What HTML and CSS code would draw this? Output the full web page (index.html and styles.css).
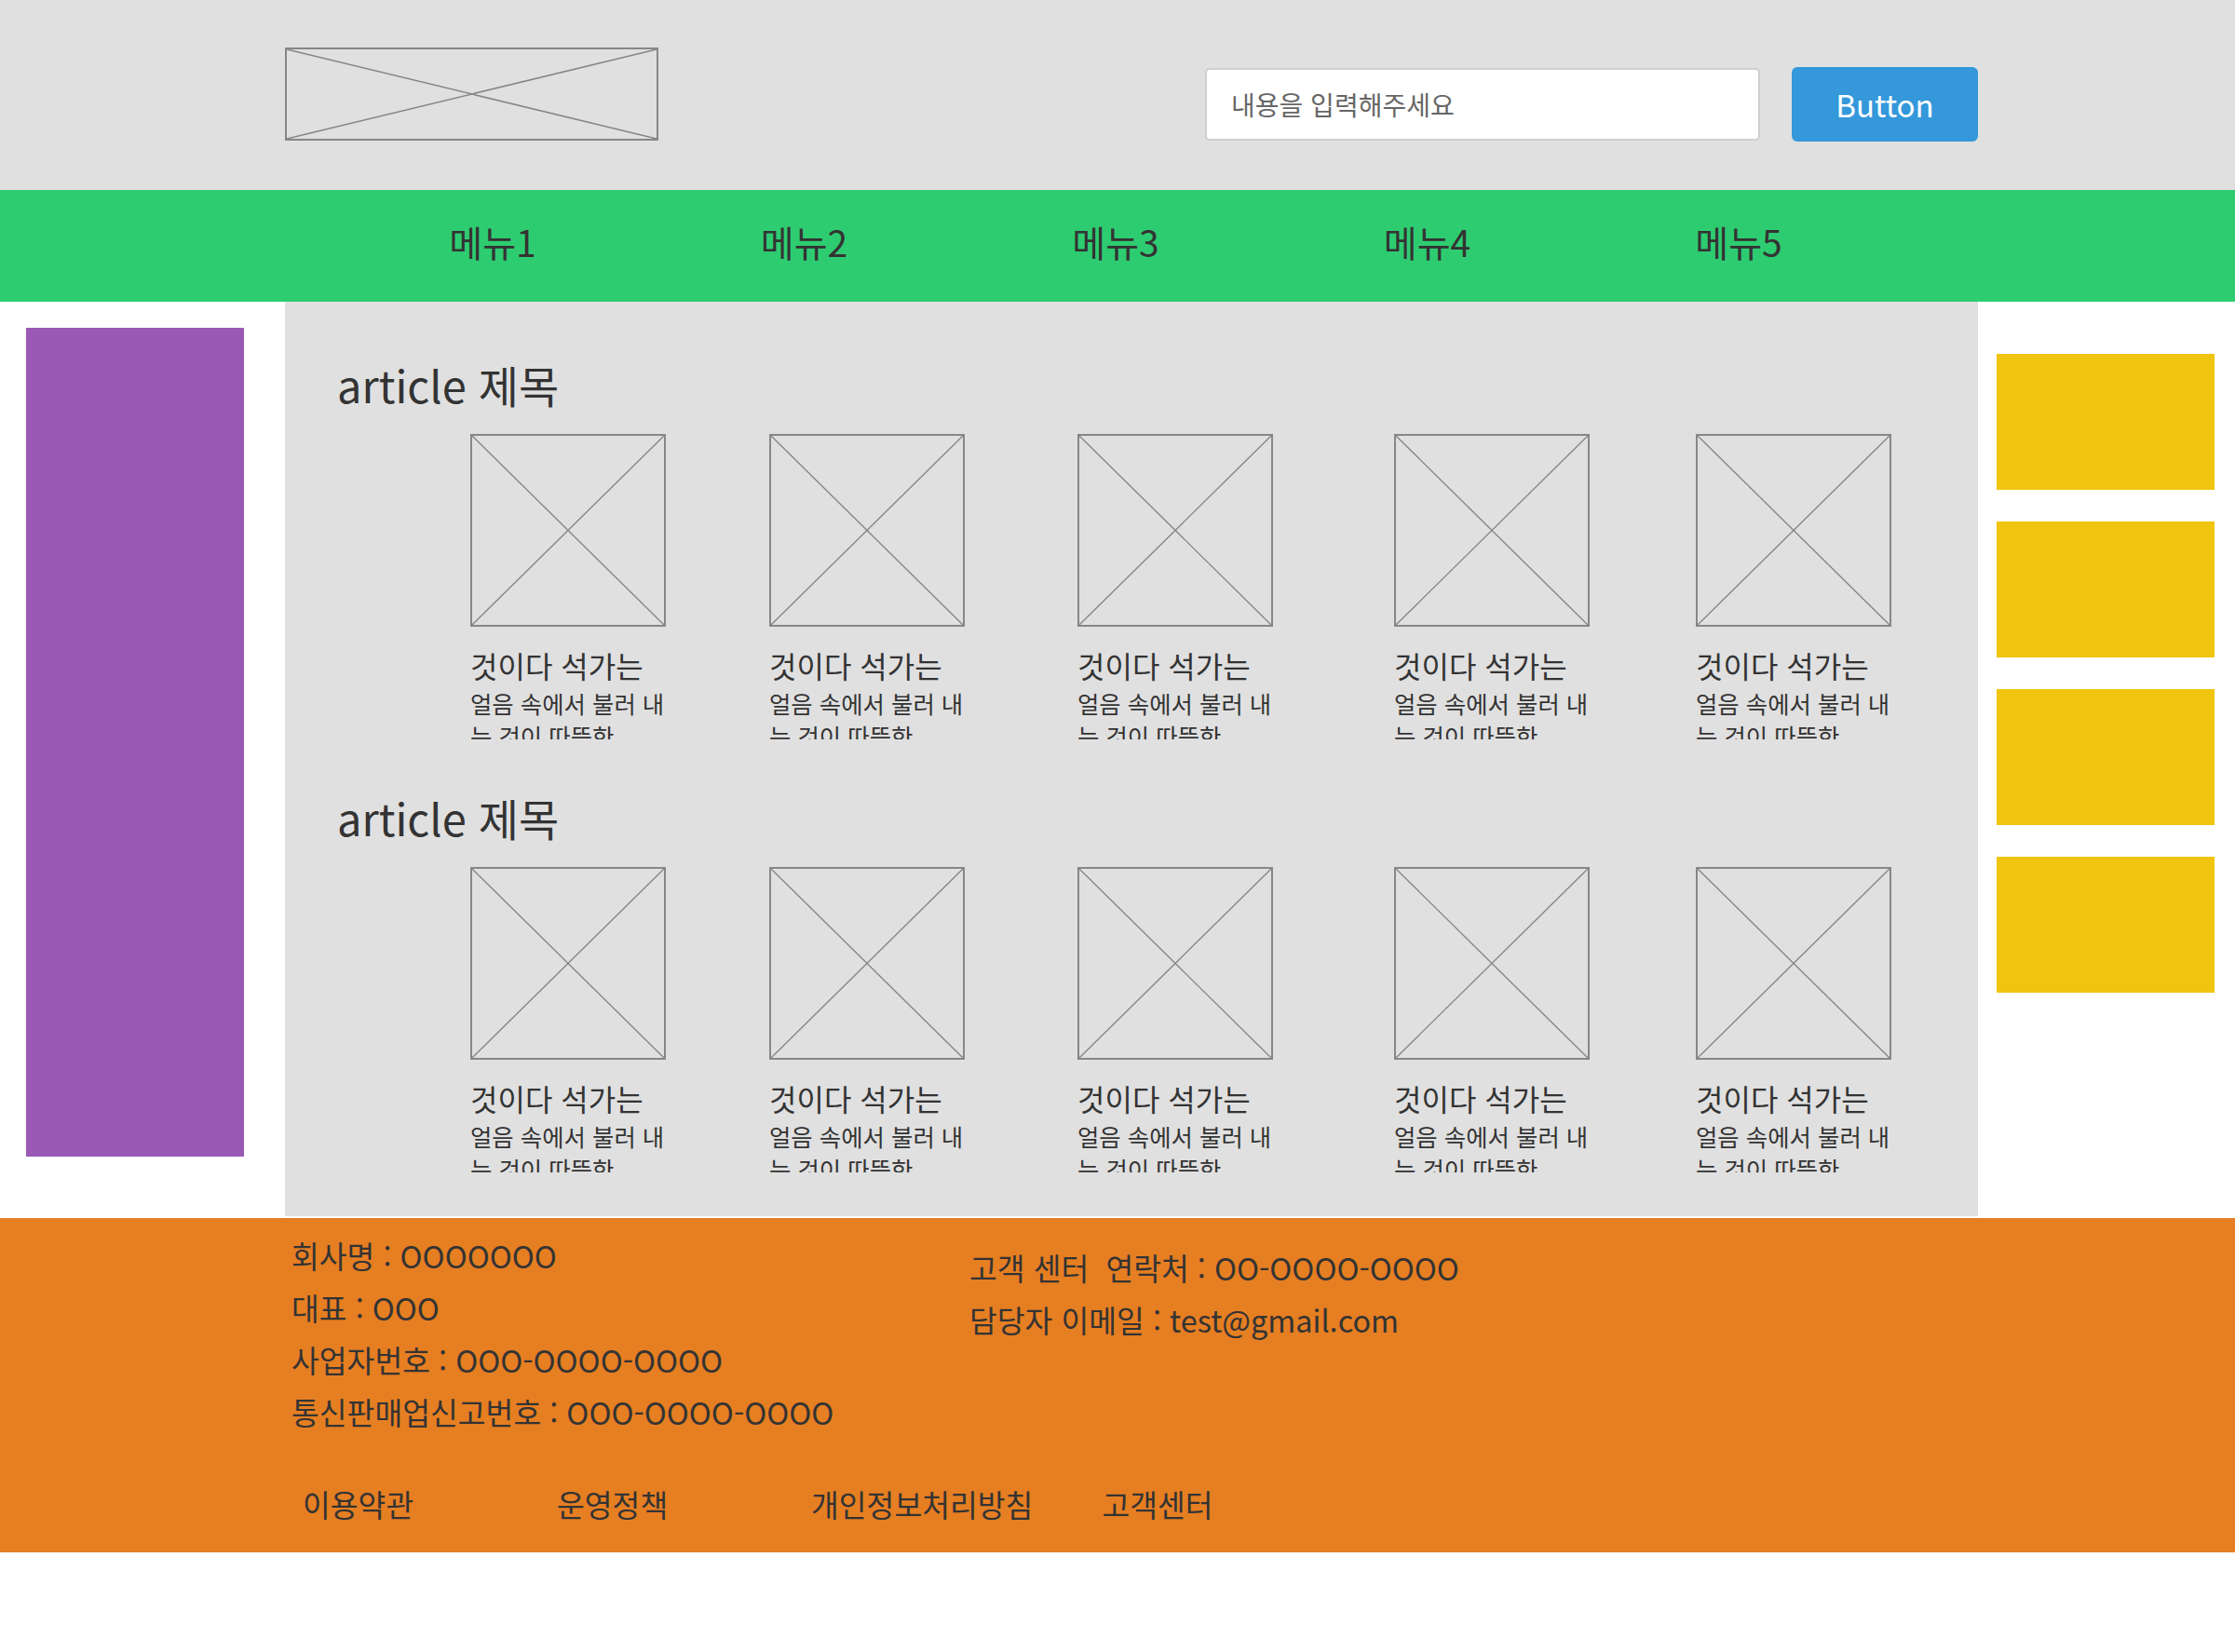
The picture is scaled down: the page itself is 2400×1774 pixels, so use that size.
FILE: index.html
```html
<!DOCTYPE html>
<html lang="ko">
<head>
<meta charset="utf-8">
<title>Layout</title>
<link rel="stylesheet" href="styles.css">
</head>
<body>
<header class="top">
  <div class="top-inner">
    <div class="logo">
      <svg viewBox="0 0 400 100" preserveAspectRatio="none">
        <rect x="1" y="1" width="398" height="98" fill="none" stroke="#878787" stroke-width="2"/>
        <line x1="2" y1="2" x2="398" y2="98" stroke="#878787" stroke-width="1.5"/>
        <line x1="398" y1="2" x2="2" y2="98" stroke="#878787" stroke-width="1.5"/>
      </svg>
    </div>
    <form class="search">
      <input class="search-input" type="text" placeholder="내용을 입력해주세요">
      <button class="search-btn" type="button">Button</button>
    </form>
  </div>
</header>

<nav class="nav">
  <ul class="nav-list">
    <li class="nav-item">메뉴1</li>
    <li class="nav-item">메뉴2</li>
    <li class="nav-item">메뉴3</li>
    <li class="nav-item">메뉴4</li>
    <li class="nav-item">메뉴5</li>
  </ul>
</nav>

<div class="layout">
  <aside class="aside-left"><div class="purple"></div></aside>

  <main class="content">
    <section class="section">
      <h2 class="section-title">article 제목</h2>
      <div class="cards">
        <div class="card"><svg class="thumb" viewBox="0 0 210 207" preserveAspectRatio="none"><rect x="1" y="1" width="208" height="205" fill="none" stroke="#878787" stroke-width="2"/><line x1="2" y1="2" x2="208" y2="205" stroke="#878787" stroke-width="1.4"/><line x1="208" y1="2" x2="2" y2="205" stroke="#878787" stroke-width="1.4"/></svg><p class="card-title">것이다 석가는</p><p class="card-desc">얼음 속에서 불러 내는 것이 따뜻한</p></div>
        <div class="card"><svg class="thumb" viewBox="0 0 210 207" preserveAspectRatio="none"><rect x="1" y="1" width="208" height="205" fill="none" stroke="#878787" stroke-width="2"/><line x1="2" y1="2" x2="208" y2="205" stroke="#878787" stroke-width="1.4"/><line x1="208" y1="2" x2="2" y2="205" stroke="#878787" stroke-width="1.4"/></svg><p class="card-title">것이다 석가는</p><p class="card-desc">얼음 속에서 불러 내는 것이 따뜻한</p></div>
        <div class="card"><svg class="thumb" viewBox="0 0 210 207" preserveAspectRatio="none"><rect x="1" y="1" width="208" height="205" fill="none" stroke="#878787" stroke-width="2"/><line x1="2" y1="2" x2="208" y2="205" stroke="#878787" stroke-width="1.4"/><line x1="208" y1="2" x2="2" y2="205" stroke="#878787" stroke-width="1.4"/></svg><p class="card-title">것이다 석가는</p><p class="card-desc">얼음 속에서 불러 내는 것이 따뜻한</p></div>
        <div class="card"><svg class="thumb" viewBox="0 0 210 207" preserveAspectRatio="none"><rect x="1" y="1" width="208" height="205" fill="none" stroke="#878787" stroke-width="2"/><line x1="2" y1="2" x2="208" y2="205" stroke="#878787" stroke-width="1.4"/><line x1="208" y1="2" x2="2" y2="205" stroke="#878787" stroke-width="1.4"/></svg><p class="card-title">것이다 석가는</p><p class="card-desc">얼음 속에서 불러 내는 것이 따뜻한</p></div>
        <div class="card"><svg class="thumb" viewBox="0 0 210 207" preserveAspectRatio="none"><rect x="1" y="1" width="208" height="205" fill="none" stroke="#878787" stroke-width="2"/><line x1="2" y1="2" x2="208" y2="205" stroke="#878787" stroke-width="1.4"/><line x1="208" y1="2" x2="2" y2="205" stroke="#878787" stroke-width="1.4"/></svg><p class="card-title">것이다 석가는</p><p class="card-desc">얼음 속에서 불러 내는 것이 따뜻한</p></div>
      </div>
    </section>

    <section class="section">
      <h2 class="section-title">article 제목</h2>
      <div class="cards">
        <div class="card"><svg class="thumb" viewBox="0 0 210 207" preserveAspectRatio="none"><rect x="1" y="1" width="208" height="205" fill="none" stroke="#878787" stroke-width="2"/><line x1="2" y1="2" x2="208" y2="205" stroke="#878787" stroke-width="1.4"/><line x1="208" y1="2" x2="2" y2="205" stroke="#878787" stroke-width="1.4"/></svg><p class="card-title">것이다 석가는</p><p class="card-desc">얼음 속에서 불러 내는 것이 따뜻한</p></div>
        <div class="card"><svg class="thumb" viewBox="0 0 210 207" preserveAspectRatio="none"><rect x="1" y="1" width="208" height="205" fill="none" stroke="#878787" stroke-width="2"/><line x1="2" y1="2" x2="208" y2="205" stroke="#878787" stroke-width="1.4"/><line x1="208" y1="2" x2="2" y2="205" stroke="#878787" stroke-width="1.4"/></svg><p class="card-title">것이다 석가는</p><p class="card-desc">얼음 속에서 불러 내는 것이 따뜻한</p></div>
        <div class="card"><svg class="thumb" viewBox="0 0 210 207" preserveAspectRatio="none"><rect x="1" y="1" width="208" height="205" fill="none" stroke="#878787" stroke-width="2"/><line x1="2" y1="2" x2="208" y2="205" stroke="#878787" stroke-width="1.4"/><line x1="208" y1="2" x2="2" y2="205" stroke="#878787" stroke-width="1.4"/></svg><p class="card-title">것이다 석가는</p><p class="card-desc">얼음 속에서 불러 내는 것이 따뜻한</p></div>
        <div class="card"><svg class="thumb" viewBox="0 0 210 207" preserveAspectRatio="none"><rect x="1" y="1" width="208" height="205" fill="none" stroke="#878787" stroke-width="2"/><line x1="2" y1="2" x2="208" y2="205" stroke="#878787" stroke-width="1.4"/><line x1="208" y1="2" x2="2" y2="205" stroke="#878787" stroke-width="1.4"/></svg><p class="card-title">것이다 석가는</p><p class="card-desc">얼음 속에서 불러 내는 것이 따뜻한</p></div>
        <div class="card"><svg class="thumb" viewBox="0 0 210 207" preserveAspectRatio="none"><rect x="1" y="1" width="208" height="205" fill="none" stroke="#878787" stroke-width="2"/><line x1="2" y1="2" x2="208" y2="205" stroke="#878787" stroke-width="1.4"/><line x1="208" y1="2" x2="2" y2="205" stroke="#878787" stroke-width="1.4"/></svg><p class="card-title">것이다 석가는</p><p class="card-desc">얼음 속에서 불러 내는 것이 따뜻한</p></div>
      </div>
    </section>
  </main>

  <aside class="aside-right">
    <div class="yellow"></div>
    <div class="yellow"></div>
    <div class="yellow"></div>
    <div class="yellow"></div>
  </aside>
</div>

<footer class="footer">
  <div class="footer-info">
    <div class="info-left">
      <p class="info-line">회사명 : OOOOOOO</p>
      <p class="info-line">대표 : OOO</p>
      <p class="info-line">사업자번호 : OOO-OOOO-OOOO</p>
      <p class="info-line">통신판매업신고번호 : OOO-OOOO-OOOO</p>
    </div>
    <div class="info-right">
      <p class="info-line">고객 센터&nbsp; 연락처 : OO-OOOO-OOOO</p>
      <p class="info-line">담당자 이메일 : test@gmail.com</p>
    </div>
  </div>
  <ul class="footer-links">
    <li class="footer-link">이용약관</li>
    <li class="footer-link">운영정책</li>
    <li class="footer-link">개인정보처리방침</li>
    <li class="footer-link">고객센터</li>
  </ul>
</footer>
</body>
</html>
```

FILE: styles.css
```css
* { box-sizing: border-box; }

body {
  margin: 0;
  width: 2400px;
  background: #ffffff;
  color: #333333;
  font-family: "Noto Sans CJK KR", "Noto Sans", sans-serif;
}

/* header */
.top {
  background: #e0e0e0;
  height: 204px;
}
.top-inner {
  margin-left: 306px;
  width: 1818px;
  display: flex;
  justify-content: space-between;
  align-items: flex-start;
}
.logo {
  margin-top: 51px;
  width: 401px;
  height: 100px;
}
.logo svg { display: block; width: 100%; height: 100%; }

.search {
  margin: 72px 0 0;
  display: flex;
  align-items: flex-start;
  gap: 34px;
}
.search-input {
  margin-top: 1px;
  width: 596px;
  height: 78px;
  border: 2px solid #cfcfcf;
  border-radius: 5px;
  background: #ffffff;
  padding: 0 26px;
  font-family: "Noto Sans CJK KR", "Noto Sans", sans-serif;
  font-size: 28px;
  color: #333333;
  outline: none;
}
.search-input::placeholder { color: #666666; }
.search-btn {
  width: 200px;
  height: 80px;
  border: 0;
  border-radius: 6px;
  background: #3498db;
  color: #ffffff;
  font-family: "Noto Sans CJK KR", "Noto Sans", sans-serif;
  font-size: 33px;
  padding: 0;
}

/* nav */
.nav {
  background: #2ecc71;
  height: 120px;
}
.nav-list {
  list-style: none;
  margin: 0;
  padding: 0 4px 0 0;
  display: flex;
  justify-content: center;
}
.nav-item {
  width: 334.5px;
  text-align: center;
  font-size: 39px;
  line-height: 110px;
  color: #333333;
}

/* body layout */
.layout {
  display: grid;
  grid-template-columns: 306px 1818px 276px;
  height: 982px;
}
.aside-left { padding: 28px 0 0 28px; }
.purple {
  width: 234px;
  height: 890px;
  background: #9b59b6;
}

.content {
  background: #e0e0e0;
  padding: 57px 0 0 56px;
}
.section + .section { margin-top: 52px; }
.section-title {
  margin: 0 0 22px;
  font-size: 47px;
  line-height: 63px;
  font-weight: 400;
  color: #333333;
}
.cards {
  display: flex;
  margin-left: 143px;
}
.card {
  width: 210px;
  height: 328px;
  overflow: hidden;
  flex: none;
}
.card:nth-child(2) { margin-left: 111px; }
.card:nth-child(3) { margin-left: 121px; }
.card:nth-child(4) { margin-left: 130px; }
.card:nth-child(5) { margin-left: 114px; }
.thumb {
  display: block;
  width: 210px;
  height: 207px;
}
.card-title {
  margin: 19px 0 0;
  font-size: 32px;
  line-height: 44px;
  white-space: nowrap;
}
.card-desc {
  margin: 2px 0 0;
  font-size: 25.4px;
  line-height: 35px;
}

.aside-right {
  padding: 56px 22px 0 20px;
  display: flex;
  flex-direction: column;
  gap: 34px;
}
.yellow {
  height: 146px;
  background: #f1c40f;
}

/* footer */
.footer {
  margin-top: 2px;
  height: 359px;
  background: #e67e22;
  padding: 12px 0 0 313px;
  font-size: 32.4px;
  line-height: 56px;
  color: #333333;
}
.footer-info { display: flex; }
.info-left { width: 728px; }
.info-right { padding-top: 13px; }
.info-line { margin: 0; white-space: pre; }
.footer-links {
  list-style: none;
  margin: 43px 0 0;
  padding: 0 0 0 12px;
  display: flex;
}
.footer-link {
  min-width: 199px;
  margin-right: 74px;
}
```
